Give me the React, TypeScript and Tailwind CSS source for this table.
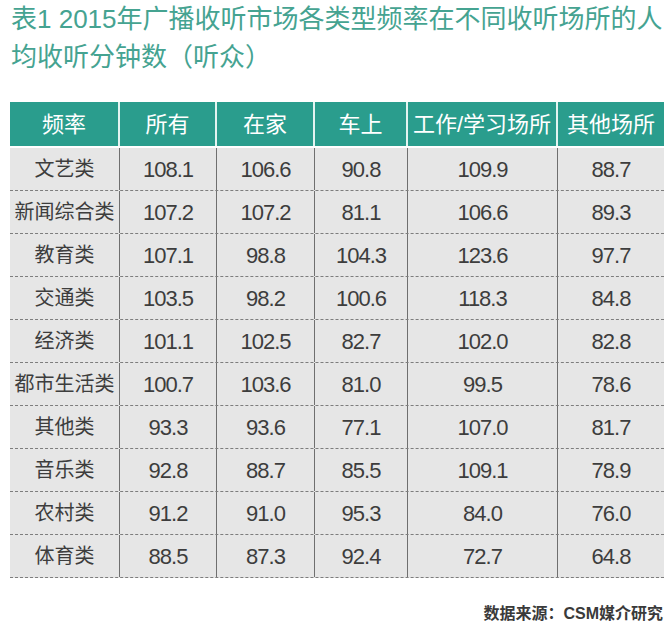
import React from "react";

type Row = {
  name: string;
  values: string[];
};

const columns = [
  { label: "频率", width: "w-[110px]" },
  { label: "所有", width: "w-[97px]" },
  { label: "在家", width: "w-[98px]" },
  { label: "车上", width: "w-[93px]" },
  { label: "工作/学习场所", width: "w-[150px]" },
  { label: "其他场所", width: "w-[106px]" },
];

const rows: Row[] = [
  { name: "文艺类", values: ["108.1", "106.6", "90.8", "109.9", "88.7"] },
  { name: "新闻综合类", values: ["107.2", "107.2", "81.1", "106.6", "89.3"] },
  { name: "教育类", values: ["107.1", "98.8", "104.3", "123.6", "97.7"] },
  { name: "交通类", values: ["103.5", "98.2", "100.6", "118.3", "84.8"] },
  { name: "经济类", values: ["101.1", "102.5", "82.7", "102.0", "82.8"] },
  { name: "都市生活类", values: ["100.7", "103.6", "81.0", "99.5", "78.6"] },
  { name: "其他类", values: ["93.3", "93.6", "77.1", "107.0", "81.7"] },
  { name: "音乐类", values: ["92.8", "88.7", "85.5", "109.1", "78.9"] },
  { name: "农村类", values: ["91.2", "91.0", "95.3", "84.0", "76.0"] },
  { name: "体育类", values: ["88.5", "87.3", "92.4", "72.7", "64.8"] },
];

export default function App() {
  return (
    <div className="w-[669px] h-[629px] bg-white font-['Liberation_Sans','Noto_Sans_CJK_SC',sans-serif] overflow-hidden">
      {/* 标题 */}
      <div className="pl-[11px] text-[26px] leading-[38px] text-[#45a391] whitespace-nowrap">
        <div>表1 2015年广播收听市场各类型频率在不同收听场所的人</div>
        <div>均收听分钟数（听众）</div>
      </div>

      {/* 表格 */}
      <div className="ml-[10px] mt-[26px] w-[654px]">
        <div className="flex h-[46px] bg-[#2a9d8d] border-b-2 border-white">
          {columns.map((col, i) => (
            <div
              key={col.label}
              className={`${col.width} flex items-center justify-center text-white text-[22px] ${
                i < columns.length - 1 ? "border-r-2 border-[#e3f4f1]" : ""
              }`}
            >
              {col.label}
            </div>
          ))}
        </div>
        {rows.map((row) => (
          <div
            key={row.name}
            className="flex h-[43px] bg-[#e6e6e6] border-b border-dashed border-[#7d7d7d] text-[#3d3d3d]"
          >
            <div className="w-[110px] flex items-center justify-center text-[20px] border-r-[1.5px] border-[#6f6f6f]">
              {row.name}
            </div>
            {row.values.map((v, i) => (
              <div
                key={i}
                className={`${columns[i + 1].width} flex items-center justify-center text-[22px] tracking-[-1px] ${
                  i < row.values.length - 1 ? "border-r-[1.5px] border-[#6f6f6f]" : ""
                }`}
              >
                {v}
              </div>
            ))}
          </div>
        ))}
      </div>

      {/* 数据来源 */}
      <div className="mt-[24px] pr-[6px] text-right text-[16px] font-bold text-[#3a3a3a]">
        数据来源：CSM媒介研究
      </div>
    </div>
  );
}
